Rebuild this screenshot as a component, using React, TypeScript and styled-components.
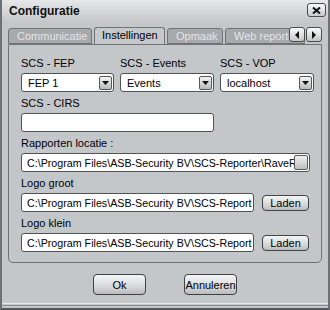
import styled, { createGlobalStyle } from "styled-components";

const GlobalStyle = createGlobalStyle`
  html, body {
    margin: 0;
    padding: 0;
    background: #c4c7ca;
  }
  body {
    font-family: "Liberation Sans", Arial, sans-serif;
    font-size: 11px;
    color: #000;
  }
`;

const Window = styled.div`
  width: 330px;
  height: 310px;
  box-sizing: border-box;
  background: #c4c7ca;
  border-left: 2px solid #6d7074;
  border-right: 2px solid #6d7074;
  border-bottom: 2px solid #55585c;
  display: flex;
  flex-direction: column;
  position: relative;
`;

const TitleBar = styled.div`
  height: 22px;
  display: flex;
  align-items: center;
  justify-content: space-between;
  padding: 0 2px 0 7px;
  background: linear-gradient(#e6e7e8, #cfd1d3 70%, #c4c7ca);
  h1 {
    margin: 0;
    font-size: 12px;
    font-weight: bold;
    color: #101010;
  }
`;

const CloseButton = styled.div`
  width: 17px;
  height: 12px;
  margin-top: -2px;
  border: 1px solid #4a4c50;
  border-radius: 3px;
  background: linear-gradient(#fafafa, #c8cacc);
  display: flex;
  align-items: center;
  justify-content: center;
`;

const Body = styled.div`
  padding: 5px 6px 0 6px;
  display: flex;
  flex-direction: column;
`;

const TabStrip = styled.div`
  height: 17px;
  display: flex;
  align-items: flex-end;
  position: relative;
  overflow: hidden;
`;

const Tab = styled.div<{ $active?: boolean; $w: number }>`
  width: ${(p) => p.$w}px;
  height: ${(p) => (p.$active ? 18 : 16)}px;
  margin-right: 2px;
  flex-shrink: 0;
  box-sizing: border-box;
  border: 1px solid #707276;
  border-bottom: ${(p) => (p.$active ? "none" : "1px solid #707276")};
  border-radius: 3px 3px 0 0;
  background: ${(p) => (p.$active ? "#c6c9cc" : "#a7a9ac")};
  color: ${(p) => (p.$active ? "#000" : "#e4e5e6")};
  font-size: 11px;
  line-height: 14px;
  white-space: nowrap;
  overflow: hidden;
  padding: 0 0 0 ${(p) => (p.$active ? 7 : 8)}px;
  align-self: flex-end;
  margin-bottom: ${(p) => (p.$active ? -1 : 0)}px;
  z-index: ${(p) => (p.$active ? 2 : 1)};
`;

const ScrollArrows = styled.div`
  position: absolute;
  right: 0;
  top: 0;
  z-index: 3;
  display: flex;
`;

const ArrowButton = styled.div`
  width: 16px;
  height: 15px;
  box-sizing: border-box;
  border: 1px solid #4a4c50;
  border-radius: 3px;
  background: linear-gradient(#fbfbfb, #c4c6c8);
  display: flex;
  align-items: center;
  justify-content: center;
  margin-left: 1px;
`;

const Panel = styled.div`
  height: 219px;
  box-sizing: border-box;
  border: 1px solid #707276;
  border-radius: 0 0 5px 5px;
  padding: 11px 9px 0 12px;
  display: flex;
  flex-direction: column;
  gap: 4px;
`;

const SelectRow = styled.div`
  display: grid;
  grid-template-columns: 93px 94px 94px;
  column-gap: 6px;
`;

const Field = styled.div`
  display: flex;
  flex-direction: column;
`;

const Label = styled.div`
  height: 14px;
  line-height: 14px;
  margin-bottom: 3px;
  font-size: 11px;
  white-space: nowrap;
`;

const Select = styled.div`
  height: 19px;
  box-sizing: border-box;
  border: 1px solid #505256;
  border-radius: 3px;
  background: #fff;
  display: flex;
  align-items: center;
  justify-content: space-between;
  padding: 0 1px 0 6px;
  font-size: 11px;
`;

const DropButton = styled.div`
  width: 13px;
  height: 14px;
  box-sizing: border-box;
  border: 1px solid #55585c;
  border-radius: 2px;
  background: linear-gradient(#f4f4f4, #b8babc);
  display: flex;
  align-items: center;
  justify-content: center;
`;

const Input = styled.div<{ $w: number }>`
  width: ${(p) => p.$w}px;
  height: 19px;
  box-sizing: border-box;
  border: 1px solid #505256;
  border-radius: 3px;
  background: #fff;
  display: flex;
  align-items: center;
  padding: 0 1px 0 5px;
  overflow: hidden;
  white-space: nowrap;
  font-size: 10.7px;
  span {
    flex: 1;
    overflow: hidden;
  }
`;

const BrowseButton = styled.div`
  width: 14px;
  height: 15px;
  flex-shrink: 0;
  box-sizing: border-box;
  border: 1px solid #55585c;
  border-radius: 2px;
  background: linear-gradient(#f0f0f0, #bcbec0);
`;

const InputRow = styled.div`
  display: flex;
  align-items: center;
  gap: 8px;
`;

const PushButton = styled.div<{ $w: number; $h: number }>`
  width: ${(p) => p.$w}px;
  height: ${(p) => p.$h}px;
  box-sizing: border-box;
  border: 1px solid #404246;
  border-radius: 4px;
  background: linear-gradient(#f6f6f6, #d6d8da 60%, #b9bbbd);
  display: flex;
  align-items: center;
  justify-content: center;
  font-size: 11px;
`;

const Footer = styled.div`
  display: flex;
  justify-content: center;
  gap: 38px;
  padding: 11px 0 0 0;
`;

const BottomEdge = styled.div`
  position: absolute;
  left: 0;
  right: 0;
  bottom: 2px;
  border-top: 1px solid #e8e9ea;
  border-bottom: 1px solid #8a8c90;
  height: 1px;
`;

const Triangle = ({ dir }: { dir: "down" | "left" | "right" }) => {
  const pts =
    dir === "down" ? "0,0 7,0 3.5,4" : dir === "left" ? "4,0 4,8 0,4" : "0,0 0,8 4,4";
  const w = dir === "down" ? 7 : 4;
  const h = dir === "down" ? 4 : 8;
  return (
    <svg width={w} height={h} viewBox={`0 0 ${w} ${h}`}>
      <polygon points={pts} fill="#111" />
    </svg>
  );
};

function Dropdown({ value }: { value: string }) {
  return (
    <Select>
      <span>{value}</span>
      <DropButton>
        <Triangle dir="down" />
      </DropButton>
    </Select>
  );
}

const path = "C:\\Program Files\\ASB-Security BV\\SCS-Reporter\\RaveReports";

export default function App() {
  return (
    <>
      <GlobalStyle />
      <Window>
        <TitleBar>
          <h1>Configuratie</h1>
          <CloseButton>
            <svg width="9" height="7" viewBox="0 0 9 7">
              <path d="M1 0.5 L8 6.5 M8 0.5 L1 6.5" stroke="#111" strokeWidth="2" />
            </svg>
          </CloseButton>
        </TitleBar>
        <Body>
          <TabStrip>
            <Tab $w={84}>Communicatie</Tab>
            <Tab $w={71} $active>
              Instellingen
            </Tab>
            <Tab $w={56}>Opmaak</Tab>
            <Tab $w={80}>Web reporter</Tab>
            <ScrollArrows>
              <ArrowButton>
                <Triangle dir="left" />
              </ArrowButton>
              <ArrowButton>
                <Triangle dir="right" />
              </ArrowButton>
            </ScrollArrows>
          </TabStrip>
          <Panel>
            <SelectRow>
              <Field>
                <Label>SCS - FEP</Label>
                <Dropdown value="FEP 1" />
              </Field>
              <Field>
                <Label>SCS - Events</Label>
                <Dropdown value="Events" />
              </Field>
              <Field>
                <Label>SCS - VOP</Label>
                <Dropdown value="localhost" />
              </Field>
            </SelectRow>
            <Field>
              <Label>SCS - CIRS</Label>
              <Input $w={193} />
            </Field>
            <Field>
              <Label>Rapporten locatie :</Label>
              <Input $w={289}>
                <span>{path}</span>
                <BrowseButton />
              </Input>
            </Field>
            <Field>
              <Label>Logo groot</Label>
              <InputRow>
                <Input $w={233}>
                  <span>{path}</span>
                </Input>
                <PushButton $w={47} $h={16}>
                  Laden
                </PushButton>
              </InputRow>
            </Field>
            <Field>
              <Label>Logo klein</Label>
              <InputRow>
                <Input $w={233}>
                  <span>{path}</span>
                </Input>
                <PushButton $w={47} $h={16}>
                  Laden
                </PushButton>
              </InputRow>
            </Field>
          </Panel>
          <Footer>
            <PushButton $w={53} $h={21}>
              Ok
            </PushButton>
            <PushButton $w={53} $h={21}>
              Annuleren
            </PushButton>
          </Footer>
        </Body>
        <BottomEdge />
      </Window>
    </>
  );
}
